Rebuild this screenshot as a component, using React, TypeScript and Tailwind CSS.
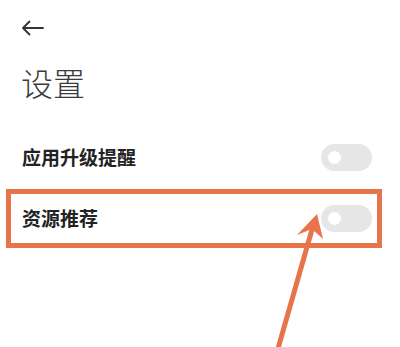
import React from 'react';

const Toggle: React.FC = () => (
  <div className="w-[51px] h-[27px] rounded-full bg-[#e6e6e6] flex items-center">
    <div className="w-[13px] h-[13px] rounded-full bg-white ml-[7px]" />
  </div>
);

export default function App() {
  return (
    <div className="relative w-[400px] h-[347px] overflow-hidden bg-white font-['Noto_Sans_CJK_SC',sans-serif]">
      <div className="h-14 flex items-center pl-[21px]">
        <svg width="23" height="16" viewBox="0 0 23 16" fill="none" stroke="#333" strokeWidth="1.8" strokeLinecap="round" strokeLinejoin="round">
          <path d="M22 8H2M8.5 1.5L2 8l6.5 6.5" />
        </svg>
      </div>

      <h1 className="mt-[10px] pl-[21px] text-[32px] leading-none font-light text-[#3a3a3a]">设置</h1>

      <div className="mt-[32px] h-[54px] flex items-center justify-between pl-[22px] pr-[28px]">
        <span className="text-[19px] font-bold text-[#222]">应用升级提醒</span>
        <Toggle />
      </div>

      <div className="mt-[5px] ml-[6px] mr-[18px] h-[59px] border-[5px] border-[#e7744b] flex items-center justify-between pl-[11px] pr-[5px]">
        <span className="text-[19px] font-bold text-[#222]">资源推荐</span>
        <Toggle />
      </div>

      <svg className="absolute inset-0 pointer-events-none" width="400" height="347" viewBox="0 0 400 347">
        <line x1="277" y1="352" x2="313" y2="226" stroke="#e7744b" strokeWidth="5" />
        <polygon points="317,214 297,235 312,229 323,239" fill="#e7744b" />
      </svg>
    </div>
  );
}
